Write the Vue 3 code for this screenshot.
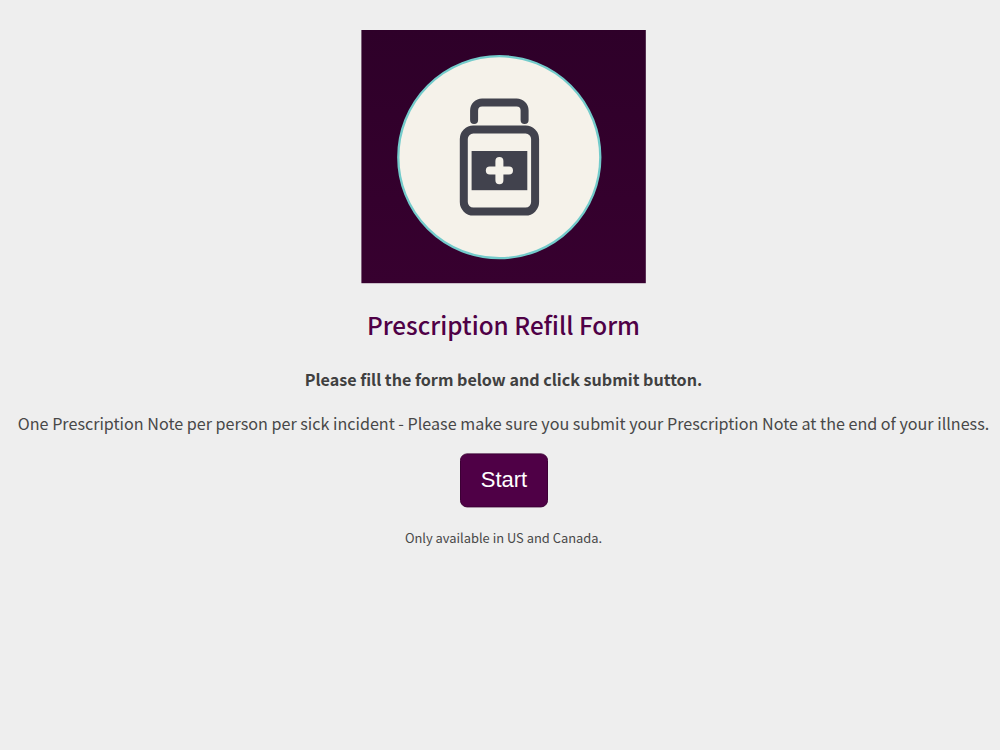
<script setup>
import { ref } from "vue";

const started = ref(false);

const intro = {
  title: "Prescription Refill Form",
  lead: "Please fill the form below and click submit button.",
  note: "One Prescription Note per person per sick incident - Please make sure you submit your Prescription Note at the end of your illness.",
  region: "Only available in US and Canada.",
};
</script>

<template>
  <main class="welcome">
    <svg class="logo" viewBox="0 0 285 254" role="img" aria-label="Medicine bottle">
      <defs>
        <linearGradient id="logo-bg" x1="0" y1="0" x2="0" y2="1">
          <stop offset="0" stop-color="#2e0029" />
          <stop offset="1" stop-color="#37002f" />
        </linearGradient>
      </defs>
      <rect x="0.4" width="284.4" height="253.2" fill="url(#logo-bg)" />
      <circle cx="138.3" cy="127.2" r="101" fill="#f5f2ea" stroke="#73cbcb" stroke-width="2.3" />
      <!-- Cap -->
      <path
        d="M113.1 90V80.5a8 8 0 0 1 8-8h34.5a8 8 0 0 1 8 8V90"
        fill="none"
        stroke="#41424d"
        stroke-width="8"
        stroke-linecap="round"
      />
      <!-- Bottle -->
      <rect
        x="102.8"
        y="99.6"
        width="71.3"
        height="82"
        rx="9.5"
        fill="none"
        stroke="#41424d"
        stroke-width="8"
      />
      <rect x="110.6" y="121" width="55.7" height="39.2" fill="#41424d" />
      <path
        d="M138.4 131v19.2M128.8 140.6H148"
        stroke="#f5f2ea"
        stroke-width="8"
        stroke-linecap="round"
      />
    </svg>

    <h1 class="title">{{ intro.title }}</h1>
    <p class="lead">{{ intro.lead }}</p>
    <p class="note">{{ intro.note }}</p>
    <button class="start" type="button" @click="started = true">Start</button>
    <p class="region">{{ intro.region }}</p>
  </main>
</template>

<style>
body {
  background: #eeeeee;
}
</style>

<style scoped>
.welcome {
  display: flex;
  flex-direction: column;
  align-items: center;
  box-sizing: border-box;
  min-height: 750px;
  padding: 30px 0 0 7px;
  overflow: hidden;
  font-family: "Noto Sans CJK SC", "Noto Sans", sans-serif;
  color: #484848;
  white-space: nowrap;
}

.logo {
  display: block;
  width: 285px;
  height: 254px;
}

.title {
  margin: 21px 0 0;
  font-size: 24.3px;
  line-height: 40px;
  font-weight: 500;
  color: #4f0046;
}

.lead {
  margin: 20px 0 0;
  font-size: 16.12px;
  line-height: 28px;
  font-weight: 700;
  color: #404040;
}

.note {
  margin: 16px 0 0;
  font-size: 16.14px;
  line-height: 28px;
}

.start {
  width: 88px;
  height: 54px;
  margin: 16px 0 0;
  padding: 0 0 1px 1px;
  border: 1px solid #3c0035;
  border-radius: 7px;
  background: #4f0046;
  color: #ffffff;
  font-family: "Liberation Sans", Arial, sans-serif;
  font-size: 22px;
  line-height: 50px;
  transform: translateY(0.4px);
}

.region {
  margin: 20px 0 0;
  font-size: 12.9px;
  line-height: 22px;
}
</style>
